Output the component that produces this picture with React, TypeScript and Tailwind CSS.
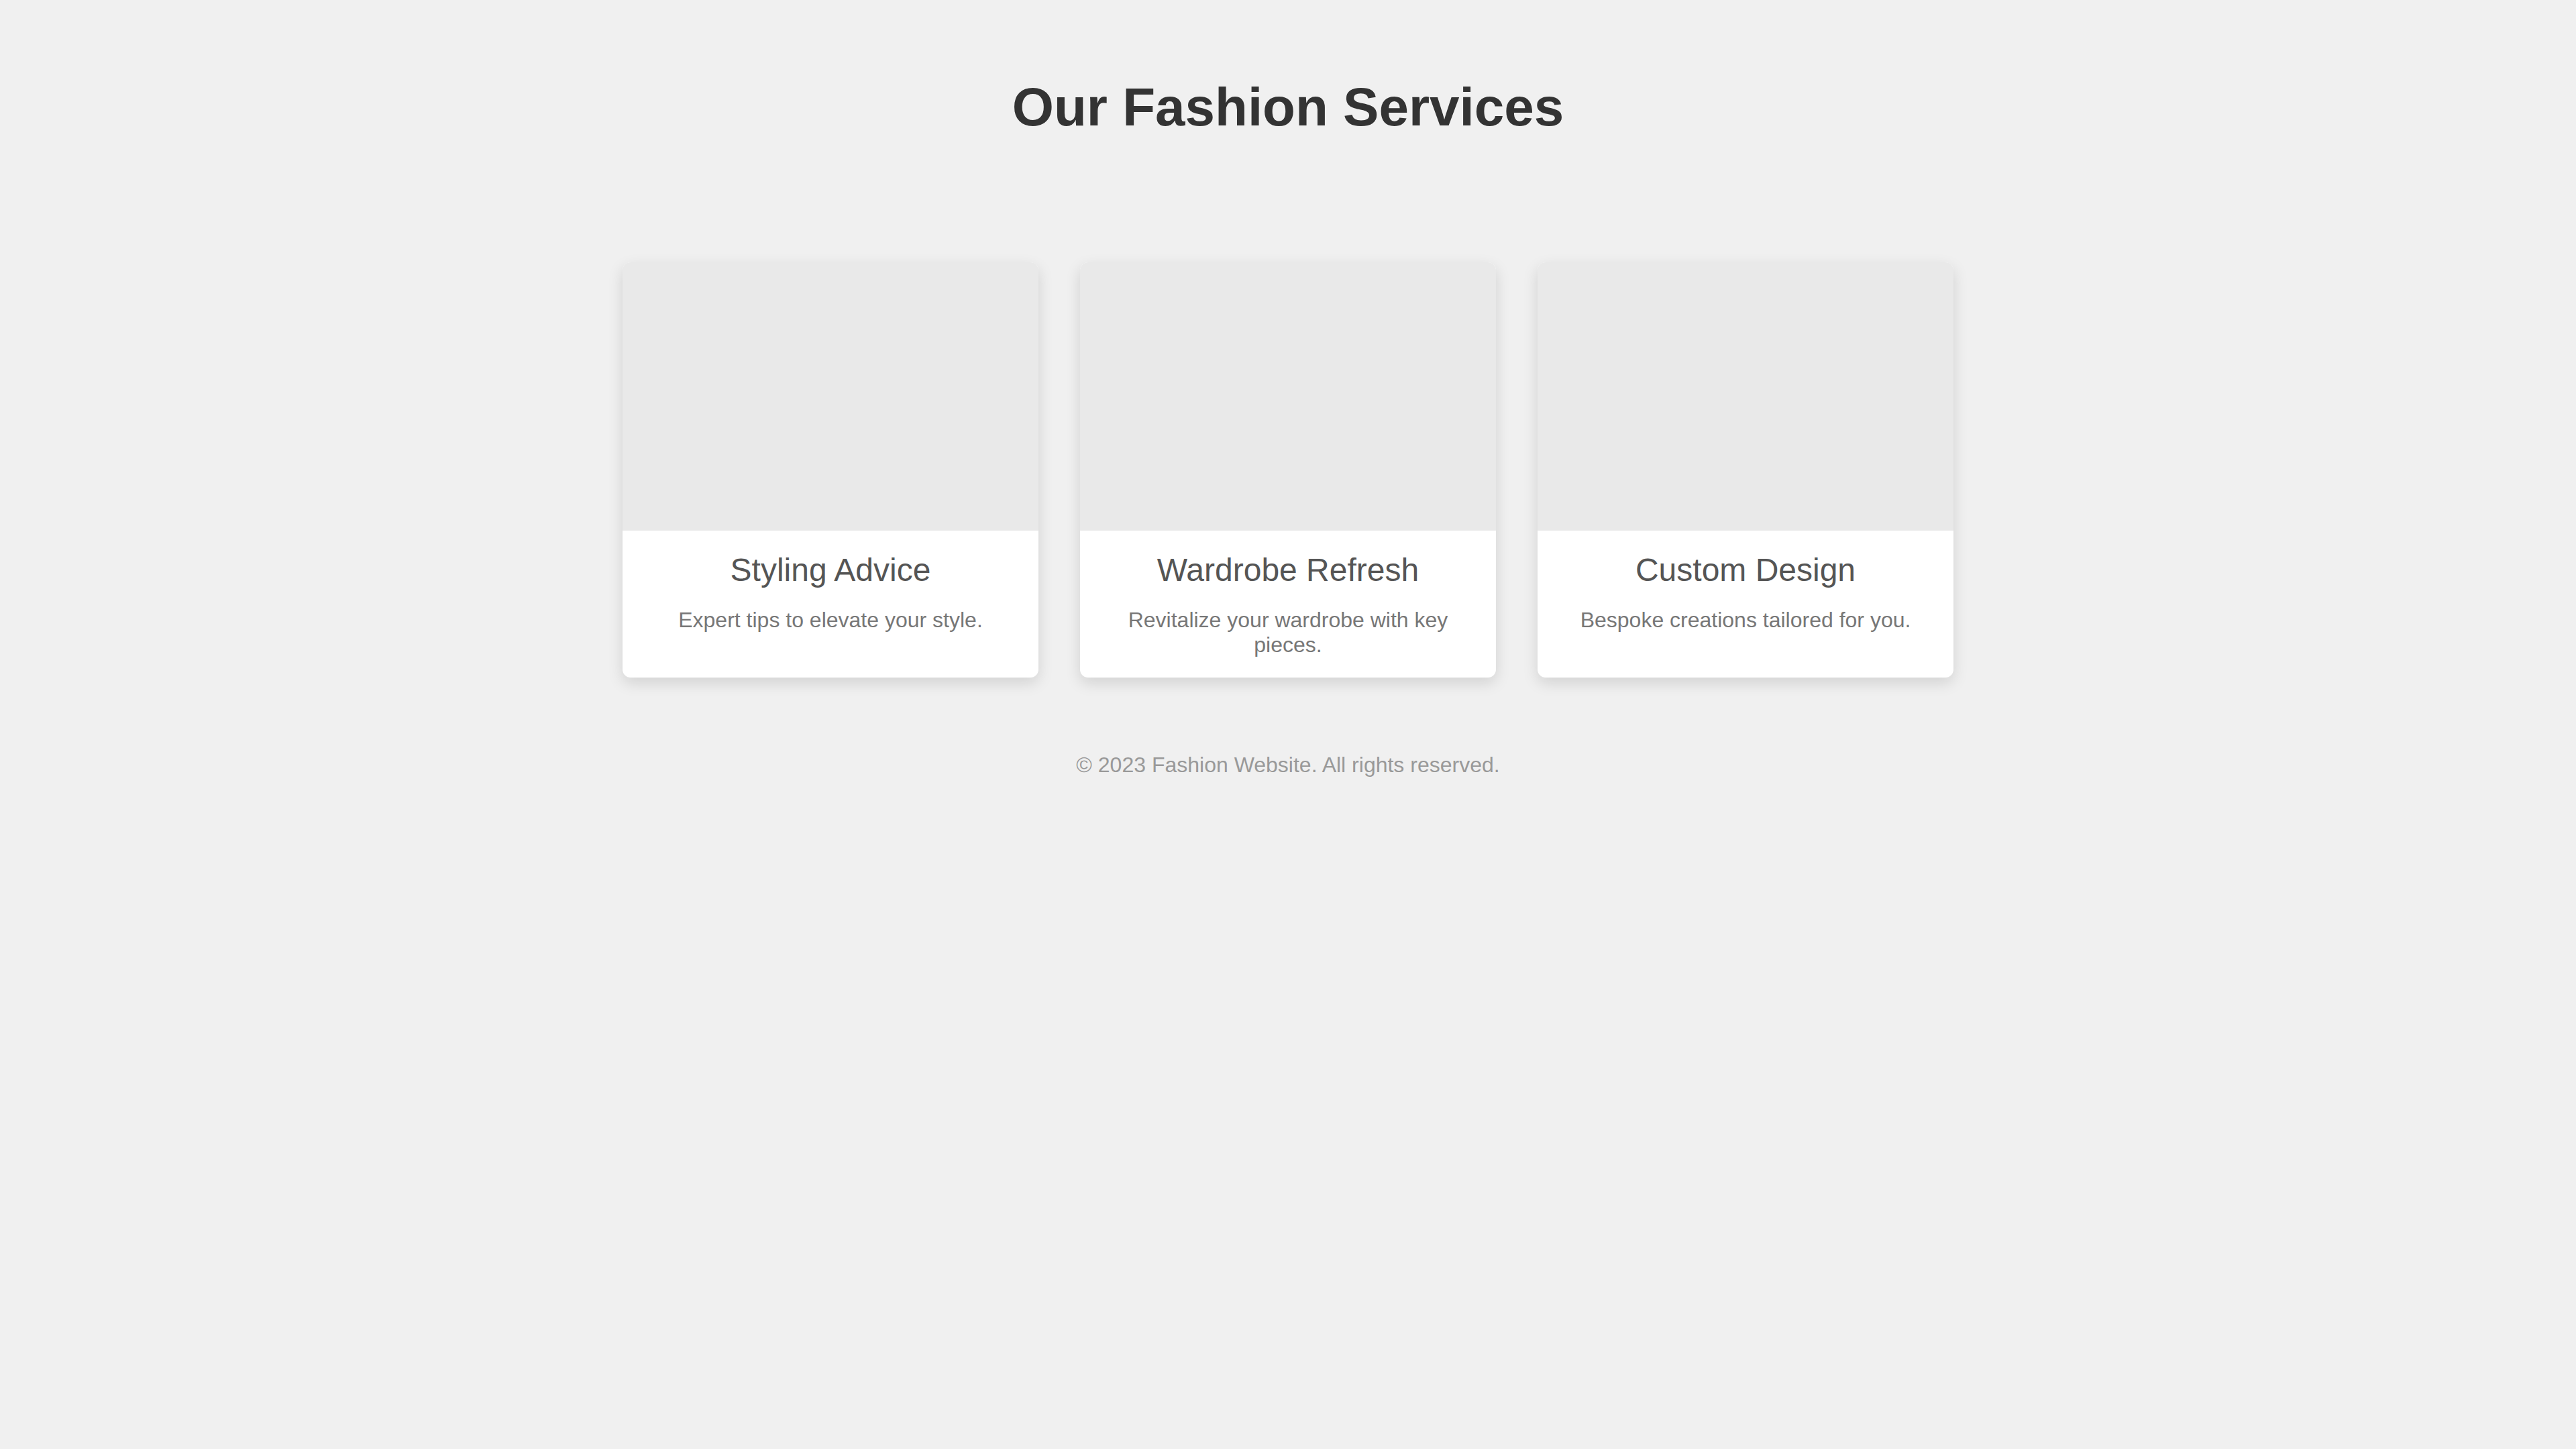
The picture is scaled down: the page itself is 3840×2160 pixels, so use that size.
import React from "react";

const services = [
  { title: "Styling Advice", desc: "Expert tips to elevate your style." },
  { title: "Wardrobe Refresh", desc: "Revitalize your wardrobe with key pieces." },
  { title: "Custom Design", desc: "Bespoke creations tailored for you." },
];

export default function App() {
  return (
    <div
      className="min-h-screen w-full bg-[#f0f0f0] pt-[114px]"
      style={{ fontFamily: '"Liberation Sans", Arial, sans-serif' }}
    >
      <h1 className="text-center text-[80px] font-bold leading-[92px] text-[#333333]">
        Our Fashion Services
      </h1>
      <div className="mt-[185px] flex justify-center gap-[62px]">
        {services.map((s) => (
          <div
            key={s.title}
            className="flex w-[620px] flex-col overflow-hidden rounded-[12px] bg-white shadow-[0_8px_22px_rgba(0,0,0,0.13)]"
          >
            <div className="h-[400px] w-full bg-[#e9e9e9]" />
            <div className="flex flex-1 flex-col items-center px-[30px] pt-[31px] pb-[30px] text-center">
              <h3 className="text-[48px] font-normal leading-[55px] text-[#555555]">
                {s.title}
              </h3>
              <p className="mt-[29px] text-[32px] leading-[37px] text-[#777777]">
                {s.desc}
              </p>
            </div>
          </div>
        ))}
      </div>
      <footer className="mt-[112px] text-center text-[32px] leading-[37px] text-[#999999]">
        © 2023 Fashion Website. All rights reserved.
      </footer>
    </div>
  );
}
